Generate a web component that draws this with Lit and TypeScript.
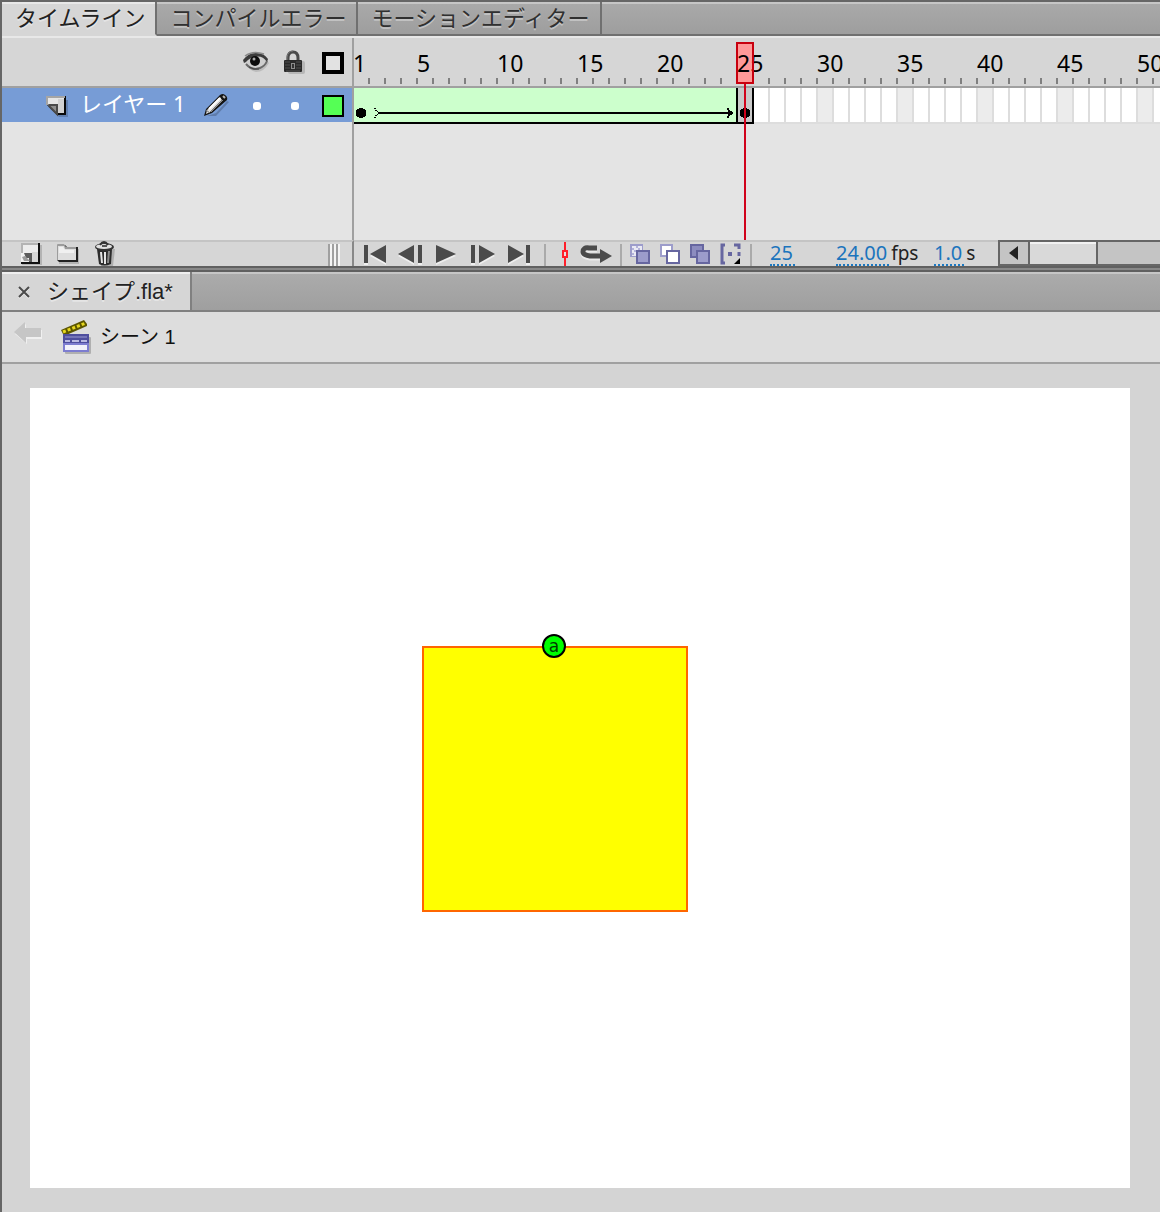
import { LitElement, html, css, svg } from "lit";
import { customElement, state } from "lit/decorators.js";
import { classMap } from "lit/directives/class-map.js";

const FRAME_WIDTH = 16;

const icon = (w: number, h: number, body: unknown) =>
  html`<svg class="icon" width=${w} height=${h} viewBox="0 0 ${w} ${h}" aria-hidden="true">${body}</svg>`;

const eyeIcon = icon(28, 24, svg`
  <path d="M3 12 Q8 6 15 7 Q22 7 26 12 Q21 21 13 21 Q6 20 3 12Z" fill="#000" opacity=".12"/>
  <path d="M2 10 Q8 3 14 3 Q22 3 24 10 Q20 18 13 18 Q6 18 2 10Z" fill="#cfcfcf"/>
  <path d="M0 9 Q6 1 14 2 Q21 2 25 8 L24 11 Q19 4 12 6 Q6 7 3 11 L1 12Z" fill="#3c3c3c"/>
  <path d="M2 5 Q10 -1 21 3" fill="none" stroke="#8a8a8a" stroke-width="1.5"/>
  <path d="M3 13 Q9 20 17 17 Q22 15 24 10" fill="none" stroke="#6a6a6a" stroke-width="2"/>
  <path d="M6 16 Q11 19 16 18" fill="none" stroke="#444" stroke-width="1"/>
  <circle cx="12" cy="10" r="5" fill="#0c0c0c"/>
  <circle cx="11" cy="8" r="1.500" fill="#aaa"/>`);

const lockIcon = icon(24, 28, svg`
  <rect x="5" y="12" width="17" height="13" rx="2" fill="#000" opacity=".14"/>
  <path d="M5 12 V9 Q5 3 10 3 Q15 3 15 9 V12" fill="none" stroke="#4a4a4a" stroke-width="3"/>
  <path d="M4 12 V8 Q5 2 10 2" fill="none" stroke="#777" stroke-width="1"/>
  <rect x="1" y="11" width="18" height="12" rx="1" fill="#2a2a2a"/>
  <path d="M2 13 H7 M2 16 H7 M2 19 H7 M13 13 H18 M13 16 H18 M13 19 H18 M3 22 H17" stroke="#505050" stroke-width="1"/>
  <rect x="8" y="14" width="4" height="6" fill="#8c8c8c"/>
  <rect x="9" y="15" width="2" height="4" fill="#333"/>`);

const layerIcon = icon(24, 24, svg`
  <path d="M4 6 H22 V23 H13 L4 14Z" fill="#000" opacity=".18"/>
  <path d="M1 2 H20 V21 H11 L1 11Z" fill="#0a0a0a"/>
  <path d="M1 2 H18 V19 H11 L1 9Z" fill="#e6e6e6"/>
  <path d="M12 5 H18 V19 H12Z" fill="#d2d2d2"/>
  <path d="M0 3 H19" stroke="#a5a5a5" stroke-width="2"/>
  <path d="M1 3 V11" stroke="#a5a5a5" stroke-width="2"/>
  <path d="M2 11 H10 V20Z" fill="#8f8f8f"/>
  <path d="M3 11 L11 11 V20 L3 12" fill="none" stroke="#4a4a4a" stroke-width="2"/>`);

const pencilIcon = icon(30, 28, svg`
  <path d="M5 24 L14 21 L25 9 L27 10 L14 24Z" fill="#000" opacity=".2"/>
  <path d="M2 24 L4 17 L18 3 Q21 1 23 3 Q26 5 25 8 L10 21Z" fill="#151515"/>
  <path d="M5 18 L18 5 L20 8 L8 20 L4 22Z" fill="#e0e0e0"/>
  <path d="M7 17 L18 6" stroke="#fff" stroke-width="2"/>
  <path d="M9 20 L21 8" stroke="#8a8a8a" stroke-width="1"/>
  <path d="M21 4 L23 6" stroke="#b5b5b5" stroke-width="2"/>
  <path d="M4 18 L8 21" stroke="#777" stroke-width="1"/>`);

const newLayerIcon = icon(22, 24, svg`
  <rect x="2" y="3" width="20" height="20" fill="#000" opacity=".16"/>
  <rect x="1" y="1" width="19" height="21" fill="#111"/>
  <rect x="1" y="1" width="17" height="19" fill="#b4b4b4"/>
  <rect x="3" y="3" width="15" height="17" fill="#ededed"/>
  <path d="M12 10 H18 V20 H12Z" fill="#d8d8d8"/>
  <path d="M1 11 H6 V15 H11 V20 H1Z" fill="#f2f2f2"/>
  <path d="M4 11 H12 V20 H9 V16 H6Z" fill="#5c5c5c"/>
  <path d="M2 15 L5 14 L10 19 L4 19Z" fill="#9a9a9a"/>`);

const folderIcon = icon(24, 24, svg`
  <path d="M3 7 H23 V22 H3Z" fill="#000" opacity=".16"/>
  <path d="M1 3 H9 L11 5 H22 V20 H3 L1 18Z" fill="#222"/>
  <path d="M1 3 Q1 2 2 2 H8 L10 5 H20 V18 H1Z" fill="#9c9c9c"/>
  <path d="M2 4 H8 L9 7 H20 V18 H2Z" fill="#dedede"/>
  <path d="M3 5 H7 L9 8 H18 V11 H3Z" fill="#f0f0f0"/>`);

const trashIcon = icon(24, 28, svg`
  <path d="M6 9 H22 L20 26 H8Z" fill="#000" opacity=".18"/>
  <path d="M4 9 H19 L18 24 Q11 27 6 24Z" fill="#2c2c2c"/>
  <path d="M8 12 L9 23 M12 12 V24" stroke="#e6e6e6" stroke-width="2"/>
  <path d="M16 11 L15 23" stroke="#8a8a8a" stroke-width="2"/>
  <ellipse cx="11.500" cy="7" rx="9.500" ry="4" fill="#333"/>
  <ellipse cx="11" cy="6.500" rx="8" ry="2.500" fill="#e0e0e0"/>
  <path d="M7 5 Q11 -1 15 5" fill="none" stroke="#333" stroke-width="2"/>
  <path d="M9 6 H14" stroke="#555" stroke-width="2"/>`);

const control = (w: number, d: string) => icon(w, 22, svg`
  <path d=${d} fill="#fff" opacity=".6" transform="translate(0 2)"/>
  <path d=${d} fill="#4b4b4b"/>`);

const playback = [
  { label: "最初のフレーム", glyph: control(24, "M2 2 H6 V20 H2Z M24 2 V20 L8 11Z") },
  { label: "前のフレーム", glyph: control(26, "M1 11 L17 2 V20Z M21 2 H25 V20 H21Z") },
  { label: "再生", glyph: control(22, "M1 2 L21 11 L1 20Z") },
  { label: "次のフレーム", glyph: control(26, "M2 2 H6 V20 H2Z M10 2 L26 11 L10 20Z") },
  { label: "最後のフレーム", glyph: control(24, "M2 2 L18 11 L2 20Z M20 2 H24 V20 H20Z") },
];

const centerIcon = icon(12, 24, svg`
  <path d="M7 0 V8 M7 16 V24" stroke="#ff1f2b" stroke-width="2"/>
  <rect x="5" y="9" width="4" height="6" fill="#e8e0e0" stroke="#ff1f2b" stroke-width="2"/>`);

const loopPath = "M17 5 H9 Q3 4 3 9 Q3 12 10 13 H22";
const loopIcon = icon(36, 22, svg`
  <path d=${loopPath} fill="none" stroke="#fff" stroke-width="5" opacity=".5" transform="translate(0 2)"/>
  <path d=${loopPath} fill="none" stroke="#4b4b4b" stroke-width="5"/>
  <path d="M20 6 L32 13 L20 20Z" fill="#4b4b4b"/>`);

const onion = [
  { label: "オニオンスキン", glyph: icon(22, 22, svg`
    <rect x="0" y="1" width="13" height="13" fill="#9d9dcb"/>
    <rect x="2" y="3" width="10" height="10" fill="#e9e9f4"/>
    <path d="M2 5 h2 v2 h-2Z M6 3 h2 v2 h-2Z M4 7 h2 v2 h-2Z M8 5 h2 v2 h-2Z M2 10 h2 v2 h-2Z" fill="#b3b3da"/>
    <rect x="7" y="8" width="12" height="12" fill="#9c9ccb" stroke="#6666a0" stroke-width="2"/>`) },
  { label: "オニオンスキンのアウトライン", glyph: icon(22, 22, svg`
    <rect x="1" y="2" width="11" height="11" fill="#fff" stroke="#9d9dcb" stroke-width="2"/>
    <rect x="7" y="8" width="12" height="12" fill="#fff" stroke="#6666a0" stroke-width="2"/>`) },
  { label: "複数フレームの編集", glyph: icon(22, 22, svg`
    <rect x="1" y="2" width="12" height="12" fill="#8c8cbf" stroke="#6666a0" stroke-width="2"/>
    <rect x="7" y="8" width="12" height="12" fill="#9c9ccb" stroke="#6666a0" stroke-width="2"/>`) },
  { label: "マーカーを変更", glyph: icon(22, 22, svg`
    <path d="M5 2 H2 V20 H5" fill="none" stroke="#6666a0" stroke-width="3"/>
    <path d="M14 2 H19 V6 M19 9 V13" fill="none" stroke="#6666a0" stroke-width="3"/>
    <rect x="8" y="9" width="4" height="4" fill="#6666a0"/>
    <path d="M20 15 V21 H14Z" fill="#000"/>`) },
];

const backIcon = icon(30, 26, svg`
  <path d="M1 13 L12 3 V9 H28 V18 H13 V23Z" fill="#f0f0f0"/>
  <path d="M0 11 L11 1 V7 H27 V16 H12 V22Z" fill="#c6c6c6"/>`);

const sceneIcon = icon(32, 36, svg`
  <rect x="4" y="18" width="26" height="17" rx="1" fill="#000" opacity=".2"/>
  <path d="M0 11 L23 1 L26 5 L26 7 L3 17Z" fill="#5c5600"/>
  <path d="M2 13 L25 4" stroke="#e6d61e" stroke-width="3" stroke-dasharray="3 2"/>
  <rect x="2" y="15" width="26" height="18" fill="#4e4e9e"/>
  <path d="M4 18 H26" stroke="#7474b8" stroke-width="2"/>
  <path d="M4 22 H9 M11 22 H18 M20 22 H26" stroke="#b9b9e2" stroke-width="2"/>
  <rect x="3" y="25" width="24" height="7" fill="#f2f2fb" stroke="#7d7dd0" stroke-width="2"/>`);

const closeIcon = icon(14, 14, svg`
  <path d="M2 2 L12 12 M12 2 L2 12" stroke="#fff" stroke-width="2" opacity=".6" transform="translate(0 1)"/>
  <path d="M2 2 L12 12 M12 2 L2 12" stroke="#4a4a4a" stroke-width="2"/>`);

const keyDot = svg`<path d="M4 0 H8 V1 H10 V2 H11 V8 H10 V9 H8 V10 H4 V9 H2 V8 H1 V2 H2 V1 H4Z"/>`;

const reset = css`
  * { box-sizing: border-box; }
  button {
    margin: 0;
    padding: 0;
    border: 0;
    background: none;
    color: inherit;
    font: inherit;
    cursor: pointer;
    display: flex;
    align-items: center;
    justify-content: center;
  }
  .icon { display: block; flex: none; }
`;

@customElement("timeline-ruler")
class TimelineRuler extends LitElement {
  @state() private frameCount = 50;

  private observer = new ResizeObserver(([entry]) => {
    this.frameCount = Math.max(25, Math.ceil(entry.contentRect.width / FRAME_WIDTH));
  });

  connectedCallback() {
    super.connectedCallback();
    this.observer.observe(this);
  }

  disconnectedCallback() {
    this.observer.disconnect();
    super.disconnectedCallback();
  }

  static styles = [reset, css`
    :host { display: block; position: relative; overflow: hidden; background: #e4e4e4; }
    .numbers { display: flex; height: 48px; background: #d6d6d6; }
    .number {
      flex: none;
      width: 16px;
      height: 46px;
      font: 23px/50px "Noto Sans", sans-serif;
      text-indent: -1px;
      color: #000;
      white-space: nowrap;
      position: relative;
      z-index: 2;
      background: linear-gradient(#808080, #808080) right bottom / 2px 6px no-repeat;
    }
    .track { display: flex; height: 38px; border-top: 2px solid #a0a0a0; }
    .frame {
      flex: none;
      width: 16px;
      background: #fff;
      border-right: 2px solid #ddd;
      border-bottom: 2px solid #ddd;
    }
    .frame.fifth { background: #ececec; }
    .tween {
      flex: none;
      display: flex;
      width: 382px;
      background: #cfc;
      border-bottom: 2px solid #000;
      align-items: flex-end;
      padding: 0 3px 4px 1px;
    }
    .line { flex: 1; height: 2px; margin: 0 -10px 4px -3px; background: #000; }
    .key {
      flex: none;
      display: flex;
      align-items: flex-end;
      justify-content: center;
      width: 18px;
      padding-bottom: 4px;
      background: #c9c9c9;
      border: solid #000;
      border-width: 0 2px 2px;
    }
    .fill, .head, .needle { position: absolute; }
    .fill { left: 382px; top: 4px; width: 18px; height: 42px; background: #ff9999; z-index: 1; }
    .head { left: 382px; top: 4px; width: 18px; height: 42px; border: 2px solid #c8000e; z-index: 3; }
    .needle { left: 390px; top: 46px; bottom: 0; width: 2px; background: #d0021b; z-index: 3; }
  `];

  render() {
    const frames = Array.from({ length: this.frameCount }, (_, i) => i + 1);
    return html`
      <div class="numbers">
        ${frames.map((n) => html`<span class="number">${n === 1 || n % 5 === 0 ? n : ""}</span>`)}
      </div>
      <div class="track">
        <div class="tween">
          ${icon(12, 10, keyDot)}
          ${icon(14, 10, svg`<path d="M7 0 h2 v1 h-2Z M8 2 h2 v1 h-2Z M10 3 h1 v1 h-1Z M10 6 h1 v1 h-1Z M8 7 h2 v1 h-2Z M7 9 h2 v1 h-2Z"/>`)}
          <span class="line"></span>
          ${icon(12, 10, svg`<path d="M6 0 h2 v2 h1 v1 h2 v1 h1 v2 h-1 v1 h-2 v1 h-1 v2 h-2 v-2 h1 v-2 h2 v-2 h-2 v-2 h-1Z"/>`)}
        </div>
        <div class="key">${icon(12, 10, keyDot)}</div>
        ${frames.slice(25).map((n) => html`<span class=${classMap({ frame: true, fifth: n % 5 === 0 })}></span>`)}
      </div>
      <div class="fill"></div>
      <div class="head"></div>
      <div class="needle"></div>
    `;
  }
}

@customElement("stage-view")
class StageView extends LitElement {
  static styles = [reset, css`
    :host { display: flex; flex: 1; padding: 24px 30px 24px 28px; background: #d4d4d4; }
    .canvas { position: relative; flex: 1; min-height: 800px; background: #fff; }
    .shape {
      position: absolute;
      left: 392px;
      top: 258px;
      width: 266px;
      height: 266px;
      background: #ff0;
      border: 2px solid #f60;
    }
    .hint {
      position: absolute;
      left: 512px;
      top: 246px;
      width: 24px;
      height: 24px;
      border: 2px solid #000;
      border-radius: 50%;
      background: #0f0;
      color: #003a00;
      font: 17px/20px "DejaVu Sans", sans-serif;
      text-align: center;
    }
  `];

  render() {
    return html`
      <div class="canvas">
        <div class="shape"></div>
        <div class="hint">a</div>
      </div>
    `;
  }
}

@customElement("app-root")
class AppRoot extends LitElement {
  @state() private activeTab = 0;

  private tabs = ["タイムライン", "コンパイルエラー", "モーションエディター"];

  static styles = [reset, css`
    :host {
      display: flex;
      flex-direction: column;
      min-height: 100vh;
      border-left: 2px solid #666;
      background: #d4d4d4;
      color: #222;
      font: 22px/30px "Liberation Sans", "Noto Sans CJK JP", sans-serif;
      overflow: hidden;
      box-sizing: border-box;
    }
    .tabs {
      display: flex;
      height: 36px;
      border-top: 2px solid #666;
      background: linear-gradient(#c6c6c6 2px, #a9a9a9 2px, #9d9d9d);
    }
    .filler { flex: 1; }
    .tab, .filler { border-bottom: 2px solid #707070; }
    .tab {
      padding: 2px 10px 0 13px;
      border-right: 2px solid #707070;
      white-space: nowrap;
      text-shadow: 0 2px 0 rgba(255, 255, 255, 0.35);
      color: #303030;
    }
    .tab.active {
      background: linear-gradient(#e8e8e8 2px, #d6d6d6 2px);
      border-bottom-color: #d6d6d6;
      color: #222;
    }
    .timeline {
      display: grid;
      grid-template-columns: 352px minmax(0, 1fr);
      grid-template-rows: 202px 26px;
      border-top: 2px solid #e8e8e8;
    }
    .layers { background: #e4e4e4; border-right: 2px solid #a0a0a0; }
    .heading, .layer { display: grid; grid-template-columns: 1fr 38px 38px 38px; }
    .heading { height: 50px; background: #d6d6d6; border-bottom: 2px solid #a0a0a0; }
    .layer { height: 34px; background: #779cd6; color: #fff; }
    .name {
      display: flex;
      align-items: center;
      gap: 8px;
      padding-left: 44px;
      font: 22px/30px "Noto Sans", "Noto Sans CJK JP", sans-serif;
    }
    .label { padding: 0 8px 6px 2px; white-space: nowrap; }
    .dot { width: 8px; height: 8px; border-radius: 3px; background: #fff; }
    .square { width: 22px; height: 22px; border: 2px solid #000; background: #5f5; }
    .square.outline { border-width: 4px; background: #e2e2e2; }
    .heading button { padding-top: 2px; }
    .tools, .controls { display: flex; border-top: 2px solid #c4c4c4; background: #d6d6d6; }
    .tools { padding-left: 10px; border-right: 2px solid #888; }
    .tool { width: 37px; }
    .grip {
      width: 12px;
      height: 22px;
      margin: 2px 12px 0 auto;
      background: repeating-linear-gradient(90deg, #a0a0a0 0 2px, #f4f4f4 2px 4px);
    }
    .group { display: flex; }
    .group.play { padding: 0 8px 0 2px; }
    .group.loop { padding-right: 6px; }
    .group.onion { padding: 0 4px; }
    .group.play button, .group.loop button { width: 36px; }
    .group.loop button + button { width: 32px; }
    .group.onion button { width: 30px; }
    .rule { width: 2px; margin-top: 2px; background: #aaa; }
    .values {
      display: grid;
      grid-template-columns: 66px 98px 64px;
      padding-left: 18px;
      font: 19px/22px "Noto Sans", sans-serif;
      color: #222;
    }
    .value { display: flex; gap: 2px; white-space: nowrap; }
    .value button {
      padding-right: 2px;
      border-bottom: 2px dotted #1b78c2;
      font-size: 20px;
      color: #1b74bd;
    }
    .scroll {
      flex: 1;
      display: flex;
      margin-top: -2px;
      border: 2px solid #666;
      border-right: 0;
      background: #c4c4c4;
    }
    .step { width: 28px; }
    .thumb {
      width: 70px;
      border: solid #666;
      border-width: 0 2px;
      background: linear-gradient(#f2f2f2 2px, #d9d9d9 2px);
    }
    .divider { height: 6px; background: #888; border: solid #606060; border-width: 2px 0; }
    .files {
      display: flex;
      height: 40px;
      border-bottom: 2px solid #808080;
      background: linear-gradient(#c6c6c6 2px, #ababab 2px, #9f9f9f);
    }
    .file {
      display: flex;
      align-items: center;
      gap: 16px;
      padding: 2px 17px 0 15px;
      border-right: 2px solid #808080;
      background: linear-gradient(#efefef 2px, #d6d6d6 2px);
      text-shadow: 0 2px 0 rgba(255, 255, 255, 0.4);
      white-space: nowrap;
    }
    .path {
      display: flex;
      align-items: center;
      height: 52px;
      padding-left: 12px;
      border-bottom: 2px solid #a0a0a0;
      background: #ddd;
    }
    .back { padding-bottom: 6px; }
    .scene {
      display: flex;
      align-items: center;
      gap: 7px;
      margin-left: 17px;
      font-size: 20px;
      color: #111;
      text-decoration: none;
    }
  `];

  render() {
    return html`
      <div class="tabs" role="tablist">
        ${this.tabs.map((t, i) => html`
          <button role="tab" aria-selected=${i === this.activeTab}
            class=${classMap({ tab: true, active: i === this.activeTab })}
            @click=${() => (this.activeTab = i)}>${t}</button>`)}
        <span class="filler"></span>
      </div>
      <section class="timeline">
        <div class="layers">
          <div class="heading">
            <span></span>
            <button aria-label="表示">${eyeIcon}</button>
            <button aria-label="ロック">${lockIcon}</button>
            <button aria-label="アウトライン"><span class="square outline"></span></button>
          </div>
          <div class="layer">
            <div class="name">${layerIcon}<span class="label">レイヤー 1</span>${pencilIcon}</div>
            <button aria-label="レイヤーの表示"><span class="dot"></span></button>
            <button aria-label="レイヤーのロック"><span class="dot"></span></button>
            <button aria-label="レイヤーの色"><span class="square"></span></button>
          </div>
        </div>
        <timeline-ruler></timeline-ruler>
        <div class="tools">
          <button class="tool" aria-label="新規レイヤー">${newLayerIcon}</button>
          <button class="tool" aria-label="新規フォルダー">${folderIcon}</button>
          <button class="tool" aria-label="削除">${trashIcon}</button>
          <span class="grip"></span>
        </div>
        <div class="controls">
          <div class="group play">
            ${playback.map((p) => html`<button aria-label=${p.label}>${p.glyph}</button>`)}
          </div>
          <span class="rule"></span>
          <div class="group loop">
            <button aria-label="フレームを中央に表示">${centerIcon}</button>
            <button aria-label="ループ">${loopIcon}</button>
          </div>
          <span class="rule"></span>
          <div class="group onion">
            ${onion.map((o) => html`<button aria-label=${o.label}>${o.glyph}</button>`)}
          </div>
          <span class="rule"></span>
          <div class="values">
            <span class="value"><button>25</button></span>
            <span class="value"><button>24.00</button>fps</span>
            <span class="value"><button>1.0</button>s</span>
          </div>
          <div class="scroll">
            <button class="step" aria-label="左へスクロール">
              ${icon(10, 14, svg`<path d="M0 7 L9 0 V14Z" fill="#222"/>`)}
            </button>
            <span class="thumb"></span>
          </div>
        </div>
      </section>
      <div class="divider"></div>
      <div class="files">
        <div class="file"><button aria-label="閉じる">${closeIcon}</button><span>シェイプ.fla*</span></div>
      </div>
      <nav class="path">
        <button class="back" aria-label="戻る">${backIcon}</button>
        <a class="scene" href="#scene-1">${sceneIcon}<span>シーン 1</span></a>
      </nav>
      <stage-view></stage-view>
    `;
  }
}
